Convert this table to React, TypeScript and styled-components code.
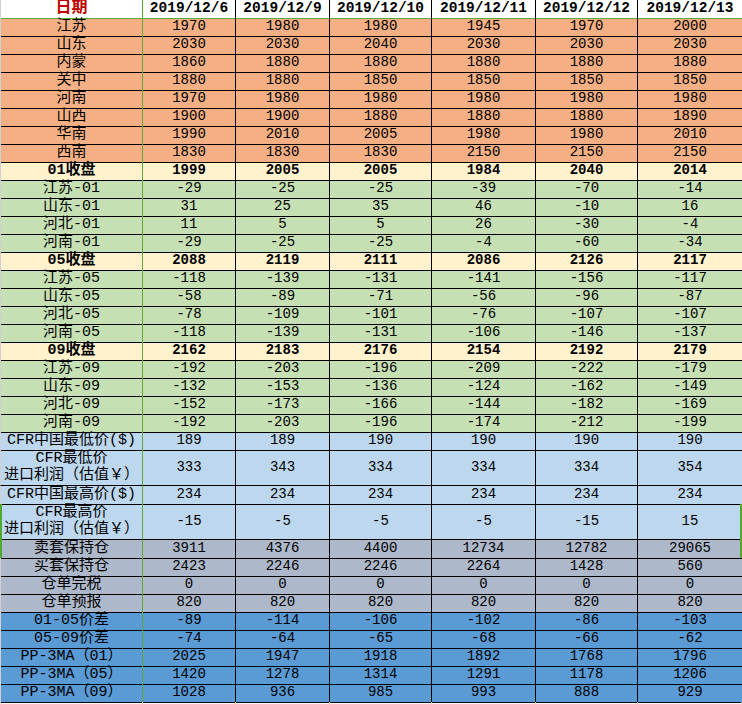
import styled, { createGlobalStyle } from 'styled-components';

const GlobalStyle = createGlobalStyle`
	html, body {
		margin: 0;
		padding: 0;
		background: #ffffff;
	}
	body {
		font-family: "Liberation Mono", "Noto Sans CJK SC", monospace;
		color: #000;
	}
`;

type Tone = 'head' | 'orange' | 'yellow' | 'green' | 'sky' | 'slate' | 'blue';

const toneColor: Record<Tone, string> = {
	head: '#ffffff',
	orange: '#F4B084',
	yellow: '#FFF2CC',
	green: '#C6E0B4',
	sky: '#BDD7EE',
	slate: '#ADB9CA',
	blue: '#5B9BD5',
};

const FREEZE = '#5FA838';
const columns = '143px 93px 94px 102px 104px 102px 104px';

const Sheet = styled.div`
	position: relative;
	width: 742px;
	height: 704px;
	overflow: hidden;
`;

const Row = styled.div<{ $tone: Tone; $tall?: boolean; $bold?: boolean }>`
	display: grid;
	grid-template-columns: ${columns};
	height: ${(p) => (p.$tall ? 36 : 18)}px;
	background: ${(p) => toneColor[p.$tone]};
	font-weight: ${(p) => (p.$bold ? 700 : 400)};
	font-size: 14px;
`;

const Cell = styled.div<{ $head?: boolean }>`
	box-sizing: border-box;
	display: flex;
	align-items: center;
	justify-content: center;
	text-align: center;
	line-height: 17px;
	white-space: nowrap;
	border-right: 1px solid #000;
	border-bottom: 1px solid ${(p) => (p.$head ? FREEZE : '#000')};
	padding-bottom: 1px;

	&:first-child {
		border-left: 1px solid #d0d0d0;
		border-right-color: ${FREEZE};
	}
	&:last-child {
		border-right: none;
	}
`;

const DateHead = styled(Cell)`
	font-size: 14.5px;
`;

const TitleText = styled.span`
	color: #C00000;
	font-weight: 700;
	font-size: 16px;
`;

const Label = styled.span`
	display: flex;
	flex-direction: column;
	align-items: center;
	font-size: 15px;
	line-height: 17px;
`;

const Tail = styled.div`
	display: grid;
	grid-template-columns: ${columns};
	height: 2px;
	& > div {
		border-right: 1px solid #d4d4d4;
	}
	& > div:first-child {
		border-left: 1px solid #d0d0d0;
	}
`;

const SelectEdge = styled.div<{ $side: 'left' | 'right' }>`
	position: absolute;
	top: 504px;
	height: 54px;
	width: 2px;
	background: #4DAA2E;
	${(p) => (p.$side === 'left' ? 'left: 0;' : 'right: 0;')}
`;

const dates = ['2019/12/6', '2019/12/9', '2019/12/10', '2019/12/11', '2019/12/12', '2019/12/13'];

type Line = { label: string[]; tone: Tone; values: string[]; bold?: boolean };

const r = (label: string, tone: Tone, values: string, bold?: boolean): Line => ({
	label: label.split('|'),
	tone,
	values: values.split(' '),
	bold,
});

const lines: Line[] = [
	r('江苏', 'orange', '1970 1980 1980 1945 1970 2000'),
	r('山东', 'orange', '2030 2030 2040 2030 2030 2030'),
	r('内蒙', 'orange', '1860 1880 1880 1880 1880 1880'),
	r('关中', 'orange', '1880 1880 1850 1850 1850 1850'),
	r('河南', 'orange', '1970 1980 1980 1980 1980 1980'),
	r('山西', 'orange', '1900 1900 1880 1880 1880 1890'),
	r('华南', 'orange', '1990 2010 2005 1980 1980 2010'),
	r('西南', 'orange', '1830 1830 1830 2150 2150 2150'),
	r('01收盘', 'yellow', '1999 2005 2005 1984 2040 2014', true),
	r('江苏-01', 'green', '-29 -25 -25 -39 -70 -14'),
	r('山东-01', 'green', '31 25 35 46 -10 16'),
	r('河北-01', 'green', '11 5 5 26 -30 -4'),
	r('河南-01', 'green', '-29 -25 -25 -4 -60 -34'),
	r('05收盘', 'yellow', '2088 2119 2111 2086 2126 2117', true),
	r('江苏-05', 'green', '-118 -139 -131 -141 -156 -117'),
	r('山东-05', 'green', '-58 -89 -71 -56 -96 -87'),
	r('河北-05', 'green', '-78 -109 -101 -76 -107 -107'),
	r('河南-05', 'green', '-118 -139 -131 -106 -146 -137'),
	r('09收盘', 'yellow', '2162 2183 2176 2154 2192 2179', true),
	r('江苏-09', 'green', '-192 -203 -196 -209 -222 -179'),
	r('山东-09', 'green', '-132 -153 -136 -124 -162 -149'),
	r('河北-09', 'green', '-152 -173 -166 -144 -182 -169'),
	r('河南-09', 'green', '-192 -203 -196 -174 -212 -199'),
	r('CFR中国最低价($)', 'sky', '189 189 190 190 190 190'),
	r('CFR最低价|进口利润（估值￥）', 'sky', '333 343 334 334 334 354'),
	r('CFR中国最高价($)', 'sky', '234 234 234 234 234 234'),
	r('CFR最高价|进口利润（估值￥）', 'sky', '-15 -5 -5 -5 -15 15'),
	r('卖套保持仓', 'slate', '3911 4376 4400 12734 12782 29065'),
	r('买套保持仓', 'slate', '2423 2246 2246 2264 1428 560'),
	r('仓单完税', 'slate', '0 0 0 0 0 0'),
	r('仓单预报', 'slate', '820 820 820 820 820 820'),
	r('01-05价差', 'blue', '-89 -114 -106 -102 -86 -103'),
	r('05-09价差', 'blue', '-74 -64 -65 -68 -66 -62'),
	r('PP-3MA（01）', 'blue', '2025 1947 1918 1892 1768 1796'),
	r('PP-3MA（05）', 'blue', '1420 1278 1314 1291 1178 1206'),
	r('PP-3MA（09）', 'blue', '1028 936 985 993 888 929'),
];

export default function App() {
	return (
		<>
			<GlobalStyle />
			<Sheet>
				<Row $tone="head" $bold>
					<Cell $head>
						<TitleText>日期</TitleText>
					</Cell>
					{dates.map((d) => (
						<DateHead $head key={d}>{d}</DateHead>
					))}
				</Row>
				{lines.map((line, i) => (
					<Row key={i} $tone={line.tone} $bold={line.bold} $tall={line.label.length > 1}>
						<Cell>
							<Label>
								{line.label.map((part) => (
									<span key={part}>{part}</span>
								))}
							</Label>
						</Cell>
						{line.values.map((v, j) => (
							<Cell key={j}>{v}</Cell>
						))}
					</Row>
				))}
				<Tail>
					{Array.from({ length: 7 }, (_, i) => (
						<div key={i} />
					))}
				</Tail>
				<SelectEdge $side="left" />
				<SelectEdge $side="right" />
			</Sheet>
		</>
	);
}
